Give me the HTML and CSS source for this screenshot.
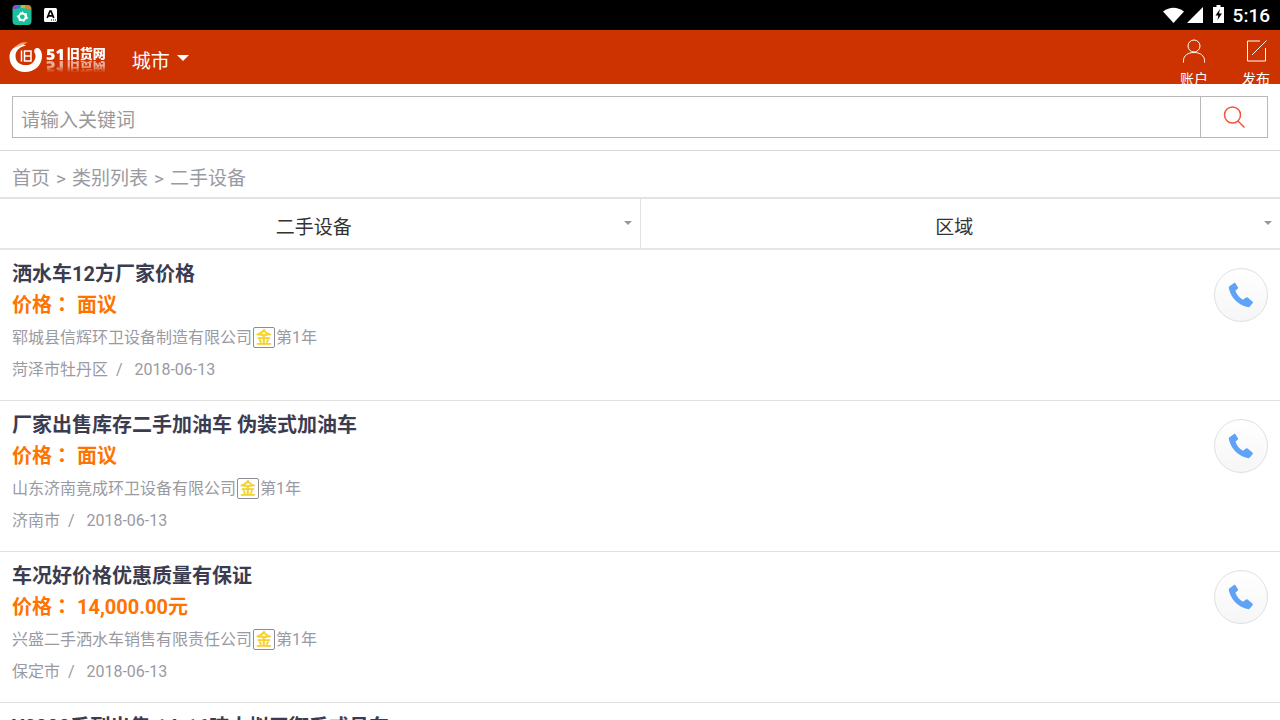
FILE: index.html
```html
<!DOCTYPE html>
<html lang="zh-CN">
	<head>
		<meta charset="utf-8" />
		<meta name="viewport" content="width=device-width, initial-scale=1">
		<title>二手设备 - 51旧货网</title>
		<link rel="stylesheet" href="styles.css">
	</head>
	<body>
		<svg class="defs" width="0" height="0">
			<symbol id="phone" viewBox="0 0 26 26">
				<path d="M1.500 4.200 6 1q1-.5 1.600.4l2.400 3.800q.5 1-.4 1.600L7.400 8.800q2 5.800 7.600 9l3-2.300q.8-.5 1.600.1l4.800 4q.9.800.2 1.700l-2.800 3.300q-.8.800-2.300.4C10 23 2.500 15 .8 6q-.2-1.200.7-1.800z" />
			</symbol>
		</svg>
		<div class="status">
			<svg width="20" height="22" viewBox="0 0 20 22">
				<rect x=".5" y="1" width="19" height="20" rx="4" fill="#1abf9b" />
				<path d="M1 5q0-4 4-4h2v4z" fill="#a33fc0" />
				<path d="M5 1h4v5H4z" fill="#3a78e0" />
				<path d="M9 1h4l1 5H8z" fill="#a5c82c" />
				<path d="M13 1h2q4 0 4 4l-5 1z" fill="#ef7a32" />
				<path d="M1 6q9-4 18 0v5H1z" fill="#1abf9b" />
				<path d="m10 7 2 2 3 .3-.2 2.800 1.500 2.200-2.700 1.100L12 18l-2.200-1.200L7 17.300l-.6-2.700L4.500 12l2.600-1.200L8 8.300l1.800.5z" fill="#fff" />
				<circle cx="10.300" cy="12.800" r="2.400" fill="#1abf9b" />
			</svg>
			<svg width="13" height="14" viewBox="0 0 13 14">
				<rect width="13" height="14" rx="1.500" fill="#fff" />
				<path d="M3.200 10 6 3h1l2.800 7M4.500 7.800h4" fill="none" stroke="#000" stroke-width="1.700" />
				<path d="M7 12h1m1 0h1m1 0h1" stroke="#000" />
			</svg>
			<div class="status-right">
				<svg width="42" height="20" viewBox="0 0 42 20">
					<path d="M0 6.500Q10.500-1 21 6.500L10.500 18z" fill="#fff" />
					<path d="M40 2v16H24z" fill="#fff" />
				</svg>
				<svg width="12" height="20" viewBox="0 0 12 20">
					<path d="M3.500 0h4v2H11v16H0V2h3.500z" fill="#fff" />
					<path d="M7 4 2.500 10.500h2.800L4.500 15 9 8.500H6z" fill="#000" />
				</svg>
				<span>5:16</span>
			</div>
		</div>
		<header class="header">
			<a class="logo" href="#">
				<svg width="34" height="32" viewBox="0 0 34 32">
					<path d="M14 3C4 5 .5 10 .5 16c0 9 7 15 15.500 15 10 0 17-7 17-16 0-4-1.500-7-4-8-3-.5-4.500 2-3.500 4.500C27 14 27 17 25 20c-2 3.500-6 4.500-10 4-5-.5-8.500-4-8.500-9C6.500 10 10 6 17 4.500z" fill="#fff" />
					<path d="M5 7Q11 0 19 1.500L13 4Z" fill="#f5a36a" />
					<path d="M12.500 9.500v11M15.500 10h6.500v10h-6.500zM15.500 15H22" fill="none" stroke="#fff" stroke-width="1.500" />
				</svg>
				<span class="logo-name"><b>51</b>旧货网</span>
			</a>
			<button class="city">城市</button>
			<nav class="nav">
				<a href="#">
					<svg width="24" height="24" viewBox="0 0 24 24">
						<circle cx="12" cy="7" r="6" />
						<path d="M1.500 23.500v-2C1.500 17 5.500 13.500 12 13.500S22.500 17 22.500 21.500v2" />
					</svg>
					账户
				</a>
				<a href="#">
					<svg width="24" height="24" viewBox="0 0 24 24">
						<path d="M16 2H3.500v20h18V9M8 16 22.500 1.500" />
					</svg>
					发布
				</a>
			</nav>
		</header>
		<form class="search">
			<input type="text" placeholder="请输入关键词" aria-label="请输入关键词">
			<button type="button" aria-label="搜索">
				<svg width="24" height="24" viewBox="0 0 24 24">
					<circle cx="10.500" cy="10" r="8" />
					<path d="m16 16 6.500 6.500" />
				</svg>
			</button>
		</form>
		<div class="crumbs">
			<a href="#">首页</a><span>&gt;</span><a href="#">类别列表</a><span>&gt;</span><a href="#">二手设备</a>
		</div>
		<div class="filter">
			<button>二手设备</button>
			<button>区域</button>
		</div>
		<main class="list">
			<article class="item">
				<div class="info">
					<h2><a href="#">洒水车12方厂家价格</a></h2>
					<p class="price">价格<span lang="zh-TW">：</span> 面议</p>
					<p>郓城县信辉环卫设备制造有限公司<i class="gold">金</i>第1年</p>
					<p>菏泽市牡丹区&nbsp; /&nbsp;&nbsp; 2018-06-13</p>
				</div>
				<a class="call" href="#" aria-label="电话"><svg><use href="#phone" /></svg></a>
			</article>
			<article class="item">
				<div class="info">
					<h2><a href="#">厂家出售库存二手加油车 伪装式加油车</a></h2>
					<p class="price">价格<span lang="zh-TW">：</span> 面议</p>
					<p>山东济南竟成环卫设备有限公司<i class="gold">金</i>第1年</p>
					<p>济南市&nbsp; /&nbsp;&nbsp; 2018-06-13</p>
				</div>
				<a class="call" href="#" aria-label="电话"><svg><use href="#phone" /></svg></a>
			</article>
			<article class="item">
				<div class="info">
					<h2><a href="#">车况好价格优惠质量有保证</a></h2>
					<p class="price">价格<span lang="zh-TW">：</span> 14,000.00元</p>
					<p>兴盛二手洒水车销售有限责任公司<i class="gold">金</i>第1年</p>
					<p>保定市&nbsp; /&nbsp;&nbsp; 2018-06-13</p>
				</div>
				<a class="call" href="#" aria-label="电话"><svg><use href="#phone" /></svg></a>
			</article>
			<article class="item">
				<div class="info">
					<h2><a href="#">Y2000系列出售 14-16吨大拟王御系式吊车</a></h2>
				</div>
			</article>
		</main>
	</body>
</html>
```
FILE: styles.css
```css
* {
	box-sizing: border-box;
}

body {
	margin: 0;
	height: 100vh;
	display: flex;
	flex-direction: column;
	overflow: hidden;
	background: #fff;
	color: #9a9aa2;
	font-family: Roboto, "Noto Sans CJK SC", sans-serif;
	font-size: 16px;
}

a {
	color: inherit;
	text-decoration: none;
}

button,
input {
	font: inherit;
	color: inherit;
	background: none;
	border: 0;
	border-radius: 0;
	padding: 0;
	margin: 0;
}

/* centered colon */
[lang="zh-TW"] {
	font-family: "Noto Sans CJK TC", sans-serif;
	line-height: 1;
}

.defs {
	position: absolute;
}

/* status bar */
.status {
	flex: none;
	height: 30px;
	display: flex;
	align-items: center;
	gap: 12px;
	padding: 0 10px 0 12px;
	background: #000;
	color: #fff;
	font-size: 19px;
	font-weight: 500;
}

.status-right {
	display: flex;
	align-items: center;
	gap: 8px;
	margin-left: auto;
}

/* header */
.header {
	flex: none;
	height: 54px;
	display: flex;
	align-items: flex-start;
	overflow: hidden;
	background: #cc3300;
	color: #fff;
}

.logo {
	display: flex;
	gap: 3px;
	padding: 11px 0 0 9px;
}

.logo-name {
	display: flex;
	align-items: center;
	height: 14px;
	margin-top: 6px;
	font-size: 13px;
	font-weight: 900;
	line-height: 14px;
	-webkit-box-reflect: below -1px linear-gradient(transparent 10%, rgba(255, 255, 255, 0.6) 60%);
}

.logo-name b {
	margin-right: 2px;
	font-family: "Open Sans", sans-serif;
	font-size: 16px;
	font-weight: 800;
}

.city {
	display: flex;
	align-items: center;
	gap: 7px;
	margin-left: 26px;
	height: 58px;
	font-size: 19px;
}

.city::after {
	content: "";
	margin-bottom: 2px;
	border: 6px solid transparent;
	border-top-color: #fff;
	border-bottom: 0;
}

.nav {
	display: flex;
	gap: 34px;
	margin-left: auto;
	padding: 9px 10px 0 0;
}

.nav a {
	display: flex;
	flex-direction: column;
	align-items: center;
	gap: 6px;
	font-size: 14px;
	line-height: 20px;
}

.nav svg {
	fill: none;
	stroke: #fff;
}

/* search */
.search {
	flex: none;
	display: flex;
	padding: 12px;
	border-bottom: 1px solid #d8d8d8;
}

.search input {
	flex: 1;
	height: 42px;
	padding: 6px 8px 0;
	border: 1px solid #b8b8b8;
	font-size: 19px;
}

.search input::placeholder {
	color: #999;
}

.search button {
	display: flex;
	align-items: center;
	justify-content: center;
	width: 67px;
	border: 1px solid #b8b8b8;
	border-left: 0;
}

.search svg {
	fill: none;
	stroke: #f0543a;
	stroke-width: 1.5;
}

.crumbs {
	flex: none;
	height: 48px;
	padding: 4px 12px 0;
	border-bottom: 2px solid #e2e2e2;
	font-size: 19px;
	line-height: 48px;
}

.crumbs span {
	margin: 0 6px;
}

/* category and region switches */
.filter {
	flex: none;
	display: flex;
	height: 51px;
	border-bottom: 2px solid #e6e6e6;
}

.filter button {
	position: relative;
	flex: 1;
	padding: 4px 12px 0 0;
	color: #333;
	font-size: 19px;
}

.filter button + button {
	border-left: 1px solid #e2e2e2;
}

.filter button::after {
	content: "";
	position: absolute;
	top: 22px;
	right: 8px;
	border: 4px solid transparent;
	border-top-color: #999;
	border-bottom: 0;
}

/* offers */
.list {
	flex: 1;
	overflow: hidden;
}

.item {
	display: flex;
	justify-content: space-between;
	padding: 9px 12px 14px;
	border-bottom: 1px solid #e0e0e0;
}

.item h2,
.item p {
	margin: 0;
	line-height: 32px;
}

.item h2,
.item .price {
	font-size: 20px;
	font-weight: 700;
	line-height: 31px;
}

.item h2 {
	color: #3c3c50;
}

.item .price {
	margin-bottom: 1px;
	color: #ff7300;
}

.gold {
	display: inline-block;
	width: 22px;
	height: 21px;
	margin: 0 1px;
	border: 1px solid #8f8b94;
	border-radius: 2px;
	color: #f5d32f;
	font-size: 16px;
	font-style: normal;
	font-weight: 700;
	line-height: 19px;
	text-align: center;
}

.call {
	display: flex;
	align-items: center;
	justify-content: center;
	width: 54px;
	height: 54px;
	margin-top: 9px;
	border: 1px solid #e0e0e4;
	border-radius: 50%;
	background: linear-gradient(#fff, #f6f6f6);
}

.call svg {
	width: 26px;
	height: 26px;
	fill: #5fa3f8;
}
```
